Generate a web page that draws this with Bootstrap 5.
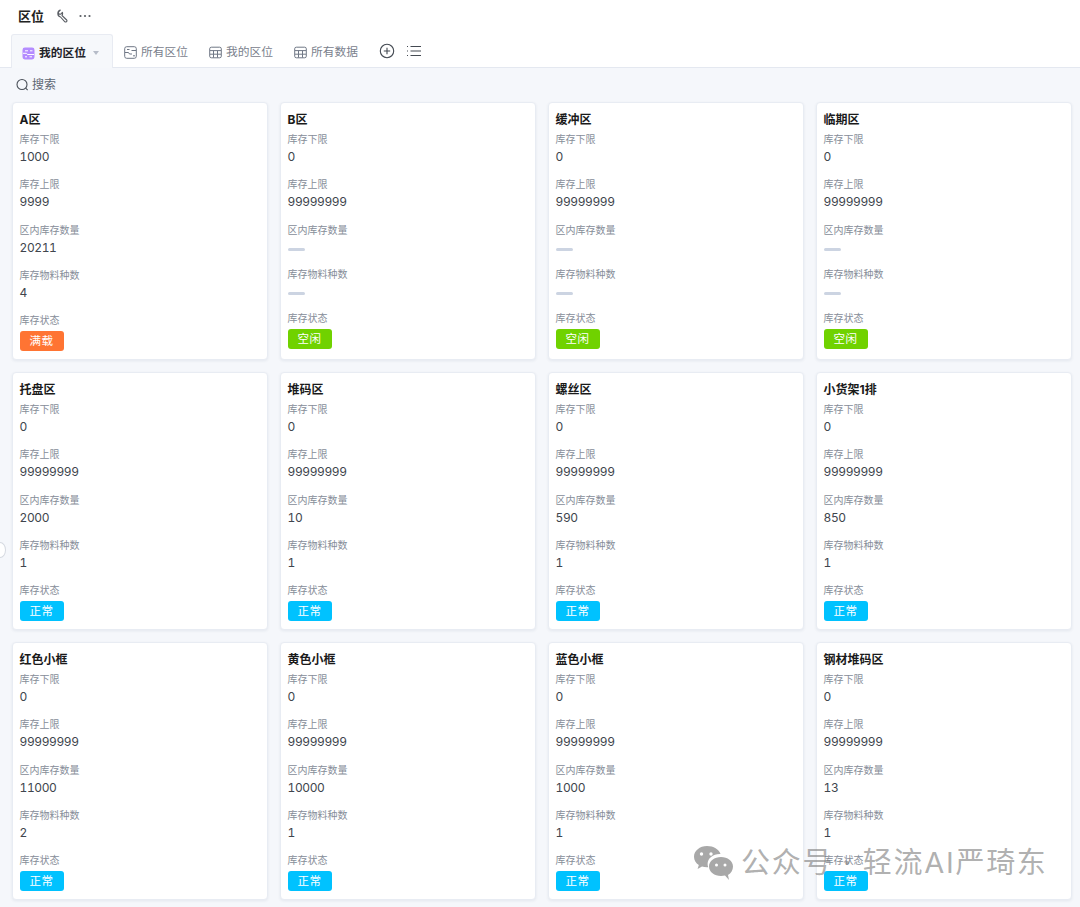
<!doctype html>
<html lang="zh"><head><meta charset="utf-8"><title>区位</title>
<link href="https://cdn.jsdelivr.net/npm/bootstrap@5.3.0/dist/css/bootstrap.min.css" rel="stylesheet">
<style>
html,body{width:1080px;height:907px;overflow:hidden}
body{background:#f5f7fb;font-family:Inter,"Noto Sans CJK SC",sans-serif;color:#141414;position:relative}
.top-zone{background:#fff;height:68px;border-bottom:1px solid #e4e8f0;position:relative}
.title-row{height:34px;padding:0 0 2px 18px;gap:10px}
.page-title{font-size:13px;font-weight:700;line-height:22px;margin:0;color:#222}
.tab-row{padding-left:11px;height:33px}
.view-tab{font-size:11.75px;line-height:18px;color:#7a818d;gap:4px;padding:3px 0 0 11px;height:33px;width:85px;flex:none}
.tab-last{width:96px}
.view-tab.on{width:102px;background:#f6f8fb;border:1px solid #e8ebf2;border-bottom:0;border-radius:3px 3px 0 0;color:#1f2329;font-weight:700;padding:3px 0 0 10px;margin-bottom:-1px;height:34px;gap:4px}
.caret-mark{width:0;height:0;border:3px solid transparent;border-top:4px solid #b6bcc8;border-bottom:0;margin-left:3px}
.tool-add{margin:9px 0 0 0;flex:none}
.tool-list{margin:9px 0 0 11px;flex:none}
.search-row{height:34px;padding:8px 0 0 16px;font-size:12px;line-height:18px;color:#5e6673;gap:3px}
.board{padding:0 8px 0 12px}
.board-row{--bs-gutter-x:12px;--bs-gutter-y:12px}
.slot{height:258px;background:#fff;border:1px solid #e8ecf3;border-radius:4px;box-shadow:0 1px 3px rgba(30,50,90,.08);padding:8px 6px 0 6.500px}
.slot-name{font-size:12px;font-weight:700;line-height:18px;color:#1a1a1a;margin:0 0 1px}
.fld{height:45.250px}
.fld.blank{height:44.250px}
.fld-label{font-size:10px;line-height:18px;color:#868d98}
.fld-val{font-size:12px;line-height:18px;color:#40454d;font-variant-numeric:tabular-nums;letter-spacing:-.4px}
.dash-mark{display:block;width:17px;height:3px;background:#ccd4e2;border-radius:2px;margin-top:9px}
.state-tag{display:block;width:44px;height:20px;border-radius:3px;color:#fff;font-size:11.500px;line-height:20px;text-align:center;letter-spacing:.5px;margin-top:2px}
.st-full{background:#ff7433}.st-idle{background:#70d200}.st-ok{background:#00c2ff}
.side-knob{position:absolute;left:-6px;top:542px;width:12px;height:16px;border:1px solid #d5d9e0;border-radius:50%;background:#fff}
.mark-line{position:absolute;left:693px;top:845px;display:flex;align-items:center;gap:7px;color:rgba(125,125,125,.62);font-size:29px;line-height:36px;white-space:nowrap;letter-spacing:1.7px;pointer-events:none}
</style></head><body>
<header class="top-zone">
<div class="title-row d-flex align-items-center"><h1 class="page-title">区位</h1>
<svg width="14" height="14" viewBox="0 0 14 14" fill="none" stroke="#5a5e64" stroke-width="1.100" stroke-linejoin="round"><path d="M6.300 1.100 4.400 3l.3 1.900 1.900.4 1.800-1.900A3.600 3.600 0 0 1 8 6.500l4.700 4.500a1.300 1.300 0 0 1-1.800 1.800L6.500 8A3.600 3.600 0 0 1 6.300 1.100z"/></svg>
<svg width="14" height="14" viewBox="0 0 14 14" fill="#5a5e64"><circle cx="2.500" cy="7" r="1.100"/><circle cx="7" cy="7" r="1.100"/><circle cx="11.500" cy="7" r="1.100"/></svg>
</div>
<nav class="tab-row d-flex">
<div class="view-tab on d-flex align-items-center"><svg width="13" height="13" viewBox="0 0 13 13"><rect x=".5" y=".5" width="12" height="12" rx="2.400" fill="#b48cff"/><path d="M1 6.300h3.500l1 1.200H12M3 3.800h3M8 3.800h2.500M3 9.800h2M7.500 9.800H10" stroke="#fff" fill="none"/></svg><span>我的区位</span><i class="caret-mark"></i></div>
<div class="view-tab d-flex align-items-center"><svg width="13" height="13" viewBox="0 0 13 13" fill="none" stroke="#6f7785"><rect x=".7" y=".7" width="11.600" height="11.600" rx="2"/><path d="M1 6.500h3.500l1 1.500H8M7.500 4.500H12M3 3.500h2.500M9 9.800h2"/></svg><span>所有区位</span></div>
<div class="view-tab d-flex align-items-center"><svg width="13" height="13" viewBox="0 0 13 13" fill="none" stroke="#6f7785"><rect x=".7" y="1.200" width="11.600" height="10.600" rx="1.600"/><path d="M1 4.600h11M1 8.200h11M4.500 4.600v7M8.500 4.600v7"/></svg><span>我的区位</span></div>
<div class="view-tab tab-last d-flex align-items-center"><svg width="13" height="13" viewBox="0 0 13 13" fill="none" stroke="#6f7785"><rect x=".7" y="1.200" width="11.600" height="10.600" rx="1.600"/><path d="M1 4.600h11M1 8.200h11M4.500 4.600v7M8.500 4.600v7"/></svg><span>所有数据</span></div>
<svg class="tool-add" width="16" height="16" viewBox="0 0 16 16" fill="none" stroke="#444a52" stroke-width="1.100"><circle cx="8" cy="8" r="6.700"/><path d="M8 4.800v6.400M4.800 8h6.400"/></svg>
<svg class="tool-list" width="16" height="16" viewBox="0 0 16 16" fill="none" stroke="#444a52" stroke-width="1.100"><path d="M4.500 3.500H15M4.500 8H15M4.500 12.500H15M1 3.500h1M1 8h1M1 12.500h1"/></svg>
</nav></header>
<div class="search-row d-flex"><svg class="search-ico" width="13" height="18" viewBox="0 0 13 18" fill="none" stroke="#4a5059" stroke-width="1.100"><circle cx="6" cy="8.500" r="5"/><path d="M9.700 12.200l2 2"/></svg><span>搜索</span></div>
<main class="board"><div class="row board-row">
<div class="col-3"><div class="slot"><h2 class="slot-name">A区</h2><div class="fld"><div class="fld-label">库存下限</div><div class="fld-val">1000</div></div><div class="fld"><div class="fld-label">库存上限</div><div class="fld-val">9999</div></div><div class="fld"><div class="fld-label">区内库存数量</div><div class="fld-val">20211</div></div><div class="fld"><div class="fld-label">库存物料种数</div><div class="fld-val">4</div></div><div class="fld-label">库存状态</div><span class="state-tag st-full">满载</span></div></div>
<div class="col-3"><div class="slot"><h2 class="slot-name">B区</h2><div class="fld"><div class="fld-label">库存下限</div><div class="fld-val">0</div></div><div class="fld"><div class="fld-label">库存上限</div><div class="fld-val">99999999</div></div><div class="fld blank"><div class="fld-label">区内库存数量</div><i class="dash-mark"></i></div><div class="fld blank"><div class="fld-label">库存物料种数</div><i class="dash-mark"></i></div><div class="fld-label">库存状态</div><span class="state-tag st-idle">空闲</span></div></div>
<div class="col-3"><div class="slot"><h2 class="slot-name">缓冲区</h2><div class="fld"><div class="fld-label">库存下限</div><div class="fld-val">0</div></div><div class="fld"><div class="fld-label">库存上限</div><div class="fld-val">99999999</div></div><div class="fld blank"><div class="fld-label">区内库存数量</div><i class="dash-mark"></i></div><div class="fld blank"><div class="fld-label">库存物料种数</div><i class="dash-mark"></i></div><div class="fld-label">库存状态</div><span class="state-tag st-idle">空闲</span></div></div>
<div class="col-3"><div class="slot"><h2 class="slot-name">临期区</h2><div class="fld"><div class="fld-label">库存下限</div><div class="fld-val">0</div></div><div class="fld"><div class="fld-label">库存上限</div><div class="fld-val">99999999</div></div><div class="fld blank"><div class="fld-label">区内库存数量</div><i class="dash-mark"></i></div><div class="fld blank"><div class="fld-label">库存物料种数</div><i class="dash-mark"></i></div><div class="fld-label">库存状态</div><span class="state-tag st-idle">空闲</span></div></div>
<div class="col-3"><div class="slot"><h2 class="slot-name">托盘区</h2><div class="fld"><div class="fld-label">库存下限</div><div class="fld-val">0</div></div><div class="fld"><div class="fld-label">库存上限</div><div class="fld-val">99999999</div></div><div class="fld"><div class="fld-label">区内库存数量</div><div class="fld-val">2000</div></div><div class="fld"><div class="fld-label">库存物料种数</div><div class="fld-val">1</div></div><div class="fld-label">库存状态</div><span class="state-tag st-ok">正常</span></div></div>
<div class="col-3"><div class="slot"><h2 class="slot-name">堆码区</h2><div class="fld"><div class="fld-label">库存下限</div><div class="fld-val">0</div></div><div class="fld"><div class="fld-label">库存上限</div><div class="fld-val">99999999</div></div><div class="fld"><div class="fld-label">区内库存数量</div><div class="fld-val">10</div></div><div class="fld"><div class="fld-label">库存物料种数</div><div class="fld-val">1</div></div><div class="fld-label">库存状态</div><span class="state-tag st-ok">正常</span></div></div>
<div class="col-3"><div class="slot"><h2 class="slot-name">螺丝区</h2><div class="fld"><div class="fld-label">库存下限</div><div class="fld-val">0</div></div><div class="fld"><div class="fld-label">库存上限</div><div class="fld-val">99999999</div></div><div class="fld"><div class="fld-label">区内库存数量</div><div class="fld-val">590</div></div><div class="fld"><div class="fld-label">库存物料种数</div><div class="fld-val">1</div></div><div class="fld-label">库存状态</div><span class="state-tag st-ok">正常</span></div></div>
<div class="col-3"><div class="slot"><h2 class="slot-name">小货架1排</h2><div class="fld"><div class="fld-label">库存下限</div><div class="fld-val">0</div></div><div class="fld"><div class="fld-label">库存上限</div><div class="fld-val">99999999</div></div><div class="fld"><div class="fld-label">区内库存数量</div><div class="fld-val">850</div></div><div class="fld"><div class="fld-label">库存物料种数</div><div class="fld-val">1</div></div><div class="fld-label">库存状态</div><span class="state-tag st-ok">正常</span></div></div>
<div class="col-3"><div class="slot"><h2 class="slot-name">红色小框</h2><div class="fld"><div class="fld-label">库存下限</div><div class="fld-val">0</div></div><div class="fld"><div class="fld-label">库存上限</div><div class="fld-val">99999999</div></div><div class="fld"><div class="fld-label">区内库存数量</div><div class="fld-val">11000</div></div><div class="fld"><div class="fld-label">库存物料种数</div><div class="fld-val">2</div></div><div class="fld-label">库存状态</div><span class="state-tag st-ok">正常</span></div></div>
<div class="col-3"><div class="slot"><h2 class="slot-name">黄色小框</h2><div class="fld"><div class="fld-label">库存下限</div><div class="fld-val">0</div></div><div class="fld"><div class="fld-label">库存上限</div><div class="fld-val">99999999</div></div><div class="fld"><div class="fld-label">区内库存数量</div><div class="fld-val">10000</div></div><div class="fld"><div class="fld-label">库存物料种数</div><div class="fld-val">1</div></div><div class="fld-label">库存状态</div><span class="state-tag st-ok">正常</span></div></div>
<div class="col-3"><div class="slot"><h2 class="slot-name">蓝色小框</h2><div class="fld"><div class="fld-label">库存下限</div><div class="fld-val">0</div></div><div class="fld"><div class="fld-label">库存上限</div><div class="fld-val">99999999</div></div><div class="fld"><div class="fld-label">区内库存数量</div><div class="fld-val">1000</div></div><div class="fld"><div class="fld-label">库存物料种数</div><div class="fld-val">1</div></div><div class="fld-label">库存状态</div><span class="state-tag st-ok">正常</span></div></div>
<div class="col-3"><div class="slot"><h2 class="slot-name">钢材堆码区</h2><div class="fld"><div class="fld-label">库存下限</div><div class="fld-val">0</div></div><div class="fld"><div class="fld-label">库存上限</div><div class="fld-val">99999999</div></div><div class="fld"><div class="fld-label">区内库存数量</div><div class="fld-val">13</div></div><div class="fld"><div class="fld-label">库存物料种数</div><div class="fld-val">1</div></div><div class="fld-label">库存状态</div><span class="state-tag st-ok">正常</span></div></div>
</div></main>
<i class="side-knob"></i>
<div class="mark-line"><svg width="41" height="36" viewBox="0 0 41 36"><path fill="#a8a8a8" d="M14 1C6.800 1 1 5.800 1 11.800c0 3.400 1.900 6.300 4.800 8.300L4.600 24l4.400-2.400c1.500.4 3.200.7 5 .7h1.200C14.800 21 14.600 20 14.600 19c0-5.600 5.400-10 12-10h.9C26 4.400 20.600 1 14 1z"/><path fill="#a8a8a8" d="M40 21.500C40 16 34.500 12 28 12S16 16 16 21.500 21.500 31 28 31c1.400 0 2.800-.2 4-.5L36 35l-1-5c3-1.800 5-4.900 5-8.500z"/><g fill="#fff"><circle cx="8.500" cy="9" r="1.700"/><circle cx="18" cy="9" r="1.700"/><circle cx="23.500" cy="20" r="1.500"/><circle cx="32" cy="20" r="1.500"/></g></svg><span>公众号 · 轻流AI严琦东</span></div>
<script src="https://cdn.jsdelivr.net/npm/bootstrap@5.3.0/dist/js/bootstrap.bundle.min.js"></script>
</body></html>
